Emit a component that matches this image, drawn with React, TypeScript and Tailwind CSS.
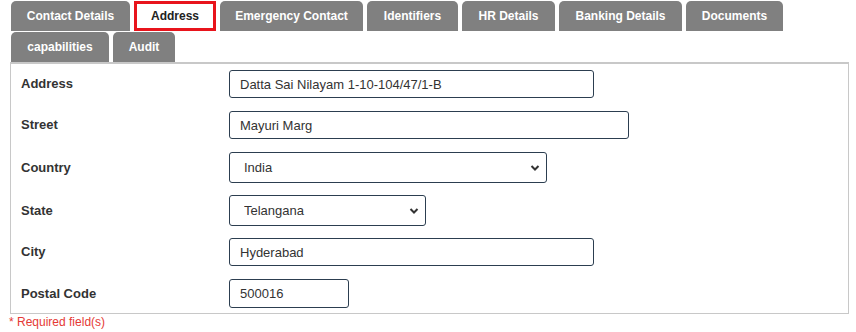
import { useState } from "react";

const row1 = [
  { label: "Contact Details", w: "w-[119px]" },
  { label: "Address", w: "w-[82px]" },
  { label: "Emergency Contact", w: "w-[143px]" },
  { label: "Identifiers", w: "w-[91px]" },
  { label: "HR Details", w: "w-[93px]" },
  { label: "Banking Details", w: "w-[123px]" },
  { label: "Documents", w: "w-[97px]" },
];

const row2 = [
  { label: "capabilities", w: "w-[98px]" },
  { label: "Audit", w: "w-[62px]" },
];

function Tab({ label, w, active, onClick }: { label: string; w: string; active: boolean; onClick: () => void }) {
  return (
    <button
      onClick={onClick}
      className={
        active
          ? `${w} h-[30px] border-[3px] border-[#e8141c] bg-white text-[12px] font-bold text-[#222]`
          : `${w} h-[30px] rounded-t-[5px] bg-[#808080] text-[12px] font-bold text-white`
      }
    >
      {label}
    </button>
  );
}

function Chevron() {
  return (
    <svg className="pointer-events-none absolute right-[7px] top-1/2 -translate-y-1/2" width="10" height="7" viewBox="0 0 10 7">
      <path d="M1.5 1.5 L5 5 L8.5 1.5" fill="none" stroke="#333" strokeWidth="2" />
    </svg>
  );
}

const inputCls =
  "h-[28px] rounded-[3px] border border-[#2c3e50] px-[10px] text-[13px] text-[#333] outline-none";

export default function App() {
  const [tab, setTab] = useState("Address");

  return (
    <div className="h-[332px] w-[856px] bg-white font-['Liberation_Sans',Arial,sans-serif]">
      <div className="flex flex-col gap-[1px] pl-[11px] pt-[1px]">
        <div className="flex gap-[4px]">
          {row1.map((t) => (
            <Tab key={t.label} {...t} active={tab === t.label} onClick={() => setTab(t.label)} />
          ))}
        </div>
        <div className="flex gap-[4px]">
          {row2.map((t) => (
            <Tab key={t.label} {...t} active={tab === t.label} onClick={() => setTab(t.label)} />
          ))}
        </div>
      </div>

      <div className="ml-[10px] w-[839px] border border-t-2 border-[#c8c8c8] pb-[5px] pt-[6px]">
        <div className="flex flex-col gap-[13px]">
          <div className="flex items-center">
            <label className="w-[218px] pl-[10px] text-[13px] font-bold text-[#333]">Address</label>
            <input className={`${inputCls} w-[365px]`} defaultValue="Datta Sai Nilayam 1-10-104/47/1-B" />
          </div>
          <div className="flex items-center">
            <label className="w-[218px] pl-[10px] text-[13px] font-bold text-[#333]">Street</label>
            <input className={`${inputCls} w-[400px]`} defaultValue="Mayuri Marg" />
          </div>
          <div className="flex items-center">
            <label className="w-[218px] pl-[10px] text-[13px] font-bold text-[#333]">Country</label>
            <div className="relative">
              <select className="h-[31px] w-[318px] appearance-none rounded-[3px] border border-[#2c3e50] bg-white pl-[14px] text-[13px] text-[#333] outline-none" defaultValue="India">
                <option>India</option>
              </select>
              <Chevron />
            </div>
          </div>
          <div className="-mt-[1px] flex items-center">
            <label className="w-[218px] pl-[10px] text-[13px] font-bold text-[#333]">State</label>
            <div className="relative">
              <select className="h-[31px] w-[197px] appearance-none rounded-[3px] border border-[#2c3e50] bg-white pl-[14px] text-[13px] text-[#333] outline-none" defaultValue="Telangana">
                <option>Telangana</option>
              </select>
              <Chevron />
            </div>
          </div>
          <div className="-mt-[1px] flex items-center">
            <label className="w-[218px] pl-[10px] text-[13px] font-bold text-[#333]">City</label>
            <input className={`${inputCls} w-[365px]`} defaultValue="Hyderabad" />
          </div>
          <div className="flex items-center">
            <label className="w-[218px] pl-[10px] text-[13px] font-bold text-[#333]">Postal Code</label>
            <input className={`${inputCls} h-[29px] w-[120px]`} defaultValue="500016" />
          </div>
        </div>
      </div>

      <p className="pl-[9px] pt-[1px] text-[12px] leading-[14px] text-[#e53935]">* Required field(s)</p>
    </div>
  );
}
